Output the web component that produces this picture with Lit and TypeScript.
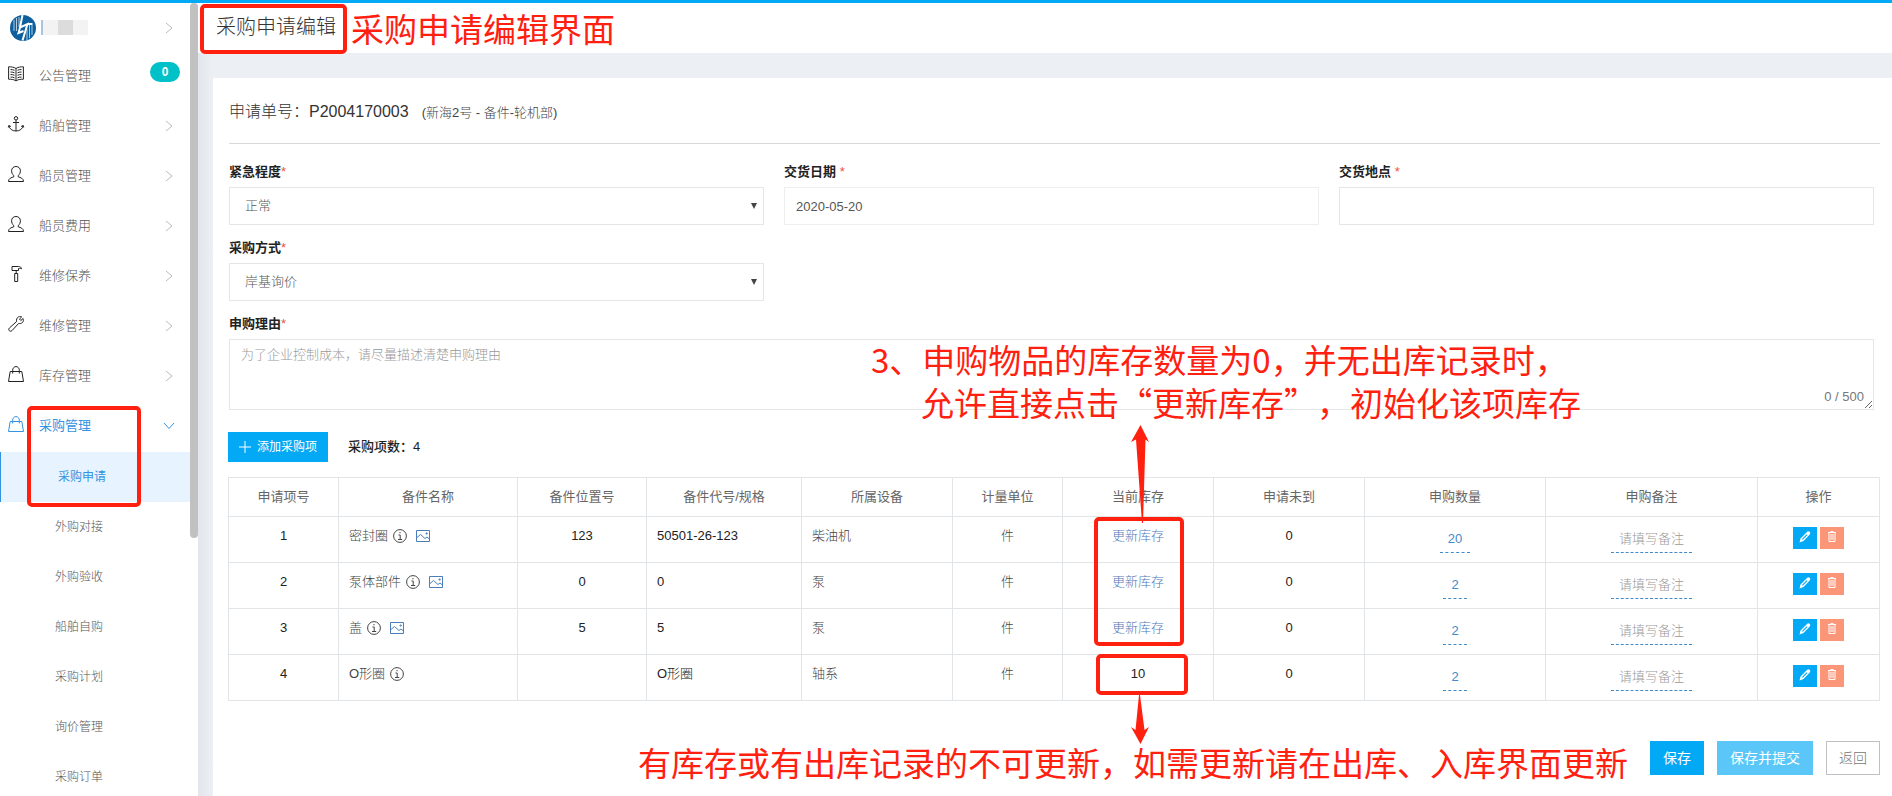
import { LitElement, html, css, svg, nothing, TemplateResult } from "lit";
import { customElement } from "lit/decorators.js";
import { classMap } from "lit/directives/class-map.js";

const chevronRight = html`<svg class="chev" viewBox="0 0 8 12" width="8" height="12" aria-hidden="true"><path d="M1 1l6 5-6 5" /></svg>`;
const chevronDown = html`<svg class="chev" viewBox="0 0 12 8" width="12" height="8" aria-hidden="true"><path d="M1 1l5 5.500 5-5.500" /></svg>`;

const icons: Record<string, TemplateResult> = {
  book: svg`<path d="M8 2.500C6 1 3 .8.600.8v12.400c2.400 0 5.400.2 7.400 1.700 2-1.500 5-1.700 7.400-1.700V.8C13 .8 10 1 8 2.500zM8 2.500v12.400M2.500 3.500c1.500 0 2.800.3 4 .8M2.500 6c1.500 0 2.800.3 4 .8M2.500 8.500c1.500 0 2.800.3 4 .8M2.500 11c1.500 0 2.800.3 4 .8M13.500 3.500c-1.500 0-2.800.3-4 .8M13.500 6c-1.500 0-2.800.3-4 .8M13.500 8.500c-1.500 0-2.800.3-4 .8M13.500 11c-1.500 0-2.800.3-4 .8"/>`,
  anchor: svg`<circle cx="8" cy="2.300" r="1.700"/><path d="M8 4v11M5 6.500h6M.8 9.500c.6 3.500 3.500 5.500 7.200 5.500s6.600-2 7.200-5.500M.3 11.500l.6-2 2 1M15.700 11.500l-.6-2-2 1"/>`,
  user: svg`<path d="M5.800 9.600C4.200 8.500 3.600 6.300 3.600 4.700 3.600 2.200 5.500.5 8 .5s4.400 1.700 4.400 4.200c0 1.600-.6 3.800-2.200 4.900v1.200c2.300.8 5.300 1.400 5.300 4.700H.5c0-3.300 3-3.900 5.300-4.700z"/>`,
  hammer: svg`<path d="M4 .5h6.500c1.500 0 2.700.6 3 2.300-1-.6-1.800-.6-3-.3V4.500H4zM6.700 7.500h3v8h-3zM8.200 4.500v3"/>`,
  wrench: svg`<path d="M10.500.9c1.200-.5 2.600-.3 3.200 0L11.500 3l1.300 1.500L15.100 2.500c.6 1.500.3 3-.6 4-1 1-2.500 1.300-3.800.9L4 14.600c-.8.800-2 .8-2.700.1-.8-.8-.7-2 .1-2.700l7.200-6.400C8.200 3.600 8.900 1.700 10.500.9z"/>`,
  bag: svg`<path d="M2.200 5.500h11.600l1.700 10H.5zM4.700 7.500V4.200C4.700 2.200 6 .6 8 .6s3.300 1.600 3.300 3.600v3.300"/>`,
};

@customElement("side-nav")
export class SideNav extends LitElement {
  static styles = css`
    :host { display: flex; flex: none; width: 198px; overflow: hidden; background: #fff; }
    nav { flex: 1; min-width: 0; }
    .brand { display: flex; align-items: center; height: 49px; box-sizing: border-box; padding: 0 17px 0 10px; gap: 5px; }
    .mask { display: flex; height: 15px; width: 47px; flex: none; }
    .mask i { flex: 1; background: #f3f3f4; }
    .mask i.edge { flex: none; width: 2px; background: #a9c4dc; }
    .mask i.dark { background: #dcdcdc; }
    .chev { fill: none; stroke: #bbb; stroke-width: 1; margin-left: auto; }
    a { display: flex; align-items: center; height: 50px; padding: 0 17px 2px 8px; box-sizing: border-box; color: #555; font-size: 13px; text-decoration: none; }
    .icon { width: 16px; height: 16px; margin: 0 15px 4px 0; fill: none; stroke: #222; stroke-width: 1; flex: none; overflow: visible; }
    .badge { margin: 0 -7px 8px auto; width: 30px; height: 20px; border-radius: 10px; background: #00c0c8; color: #fff; font-size: 12px; line-height: 20px; font-weight: 700; text-align: center; }
    .open { color: #3492e0; font-weight: 400; }
    .open .icon, .open .chev { stroke: #3492e0; }
    .open .chev { margin-right: -2px; }
    .sub { padding: 0 17px 0 55px; font-size: 12px; }
    .current { border-left: 1px solid #3492e0; padding-left: 57px; background: #e7f4ff; color: #3492e0; font-weight: 400; }
    .track { flex: none; width: 8px; }
    .thumb { height: 67.5%; border-radius: 4px; background: #c1c1c1; }
  `;
  items = [
    { icon: "book", label: "公告管理", badge: "0" },
    { icon: "anchor", label: "船舶管理" },
    { icon: "user", label: "船员管理" },
    { icon: "user", label: "船员费用" },
    { icon: "hammer", label: "维修保养" },
    { icon: "wrench", label: "维修管理" },
    { icon: "bag", label: "库存管理" },
    { icon: "bag", label: "采购管理", open: true },
  ];
  subs = ["采购申请", "外购对接", "外购验收", "船舶自购", "采购计划", "询价管理", "采购订单"];
  render() {
    return html`<nav>
        <div class="brand">
          <svg viewBox="0 0 26 26" width="26" height="26" aria-hidden="true">
            <circle cx="13" cy="13" r="13" fill="#0d5f9e" />
            <path d="M6.500 3v13M4 5v11M19.500 10v13M22 10v10M17 14v11M9 2v10" stroke="#fff" stroke-width=".7" />
            <path d="M12.500 0L10 12.500l7.500-3.500-5 16.500M10 12.500L8.500 18l5-2M17.500 9h5" stroke="#fff" stroke-width="2" fill="none" />
          </svg>
          <span class="mask"><i class="edge"></i><i></i><i class="dark"></i><i></i></span>
          ${chevronRight}
        </div>
        ${this.items.map((m) => html`<a href="#" class=${classMap({ open: !!m.open })}>
          <svg class="icon" viewBox="0 0 16 16" aria-hidden="true">${icons[m.icon]}</svg>${m.label}
          ${m.badge ? html`<span class="badge">${m.badge}</span>` : m.open ? chevronDown : chevronRight}
        </a>`)}
        ${this.subs.map((s, i) => html`<a href="#" class=${classMap({ sub: true, current: i === 0 })}>${s}</a>`)}
      </nav>
      <div class="track"><div class="thumb"></div></div>`;
  }
}

const rows = [
  { name: "密封圈", pic: true, pos: "123", code: "50501-26-123", dev: "柴油机", stock: "", qty: "20" },
  { name: "泵体部件", pic: true, pos: "0", code: "0", dev: "泵", stock: "", qty: "2" },
  { name: "盖", pic: true, pos: "5", code: "5", dev: "泵", stock: "", qty: "2" },
  { name: "O形圈", pic: false, pos: "", code: "O形圈", dev: "轴系", stock: "10", qty: "2" },
];
const columns: [string, number][] = [
  ["申请项号", 110], ["备件名称", 179], ["备件位置号", 129], ["备件代号/规格", 155], ["所属设备", 151], ["计量单位", 110],
  ["当前库存", 151], ["申请未到", 151], ["申购数量", 181], ["申购备注", 212], ["操作", 122],
];
const total = columns.reduce((a, c) => a + c[1], 0);

@customElement("item-table")
export class ItemTable extends LitElement {
  static styles = css`
    :host { display: block; }
    table { width: 100%; border-collapse: collapse; table-layout: fixed; font-size: 13px; line-height: 20px; }
    th, td { border: 1px solid #e1e5e8; padding: 0 10px; box-sizing: border-box; text-align: center; }
    th { height: 39px; font-weight: 400; color: #666; }
    td { height: 46px; padding-top: 9px; vertical-align: top; color: #222; }
    .left { text-align: left; }
    .cjk { color: #444; }
    .name { display: flex; align-items: center; gap: 5px; }
    .name svg { fill: none; stroke: #444; stroke-width: 1; flex: none; }
    .name .pic { stroke: #4a7ebb; margin-left: 4px; }
    a { color: #5079b8; text-decoration: none; }
    a.edit { display: inline-block; margin-top: 3px; padding: 0 8px 3px; border-bottom: 1px dashed #428bca; color: #428bca; }
    a.none { color: #999; }
    .ops { display: flex; justify-content: center; gap: 3px; padding-top: 1px; }
    button { width: 24px; height: 22px; padding: 0; border: 0; display: grid; place-items: center; background: #03a9f4; }
    button.del { background: #fb9678; }
    button svg { margin-bottom: 2px; }
  `;
  render() {
    return html`<table>
      <colgroup>${columns.map((c) => html`<col style="width:${(c[1] / total) * 100}%" />`)}</colgroup>
      <thead><tr>${columns.map((c) => html`<th>${c[0]}</th>`)}</tr></thead>
      <tbody>${rows.map((r, i) => html`<tr>
        <td>${i + 1}</td>
        <td class="left cjk"><span class="name">${r.name}
          <svg viewBox="0 0 14 14" width="14" height="14" aria-hidden="true"><circle cx="7" cy="7" r="6.400" /><path d="M5.500 6h1.700v4.500M5 10.500h4.200M7 3v1.300" /></svg>
          ${r.pic ? html`<svg class="pic" viewBox="0 0 14 14" width="14" height="14" aria-hidden="true"><path d="M.5 1.500h13v11H.5zM1 8.500l3.500-3 4.500 4 2-1.500 2.500 2M10 4h1.200v1H10z" /></svg>` : nothing}</span></td>
        <td>${r.pos}</td>
        <td class="left">${r.code}</td>
        <td class="left cjk">${r.dev}</td>
        <td class="cjk">件</td>
        <td>${r.stock || html`<a href="#">更新库存</a>`}</td>
        <td>0</td>
        <td><a class="edit" href="#">${r.qty}</a></td>
        <td><a class="edit none" href="#">请填写备注</a></td>
        <td><div class="ops">
          <button type="button" aria-label="编辑"><svg viewBox="0 0 12 12" width="12" height="12"><path d="M.5 11.500l1-4L8 1c1-1 1.500-1 2.500-.2s1 1.700.2 2.700L4.500 10zM3.800 8.800l4.700-4.700-.8-.8L3 8z" fill="#fff" fill-rule="evenodd" /></svg></button>
          <button type="button" class="del" aria-label="删除"><svg viewBox="0 0 12 12" width="12" height="12"><path d="M2 1.500h8M4.500.5h3M3 2v8.500h6V2M5 3v6M7 3v6" fill="none" stroke="#fff" stroke-width="1" /></svg></button>
        </div></td>
      </tr>`)}</tbody></table>`;
  }
}

@customElement("app-root")
export class AppRoot extends LitElement {
  static styles = css`
    :host { display: flex; flex-direction: column; position: relative; height: 100vh; overflow: hidden; background: #ecf0f5; color: #333; font-family: "Liberation Sans", "Noto Sans CJK SC", sans-serif; font-weight: 300; font-size: 13px; line-height: 20px; }
    .topbar { height: 3px; flex: none; background: #03a9f4; }
    .body { display: flex; flex: 1; min-height: 0; }
    main { flex: 1; min-width: 0; display: flex; flex-direction: column; background: linear-gradient(90deg, #e2e6ec, #ecf0f5 15px); }
    h1 { margin: 0; padding: 0 18px; height: 50px; flex: none; background: #fff; font-size: 20px; line-height: 48px; font-weight: 300; color: #333; box-sizing: border-box; }
    .card { flex: 1; margin: 25px 0 0 15px; padding: 22px 12px 0 15px; background: #fff; }
    h2 { display: flex; gap: 13px; align-items: baseline; margin: 0 0 18px 1px; height: 24px; padding-bottom: 19px; border-bottom: 1px solid #d8d8dc; font-size: 16px; line-height: 24px; font-weight: 300; color: #333; }
    h2 small { font-size: 13px; line-height: 20px; color: #444; }
    .form { display: grid; grid-template-columns: repeat(3, 1fr); gap: 13px 20px; padding: 0 6px 0 1px; }
    .field { display: flex; flex-direction: column; gap: 5px; position: relative; }
    .break { grid-column: 1; }
    .wide { grid-column: 1 / -1; }
    label { font-weight: 700; color: #222; }
    label b { color: #f0523c; font-weight: 300; }
    input, select, textarea { display: block; width: 100%; height: 38px; box-sizing: border-box; margin: 0; padding: 0 11px; border: 1px solid #e4e7ea; border-radius: 0; background: #fff; color: #565656; font: inherit; outline: 0; }
    select { appearance: none; padding: 0 15px; }
    .pick { display: grid; align-items: center; }
    .pick > * { grid-area: 1 / 1; }
    .pick svg { justify-self: end; margin-right: 7px; pointer-events: none; }
    .date { border-color: #eee; }
    textarea { height: 71px; padding: 5px 11px; resize: both; }
    textarea::placeholder { color: #999; opacity: 1; }
    .count { position: absolute; right: 10px; bottom: 3px; color: #777; }
    .bar { display: flex; align-items: center; gap: 20px; margin: 22px 0 15px; font-weight: 500; color: #222; }
    button { display: flex; align-items: center; justify-content: center; height: 34px; padding: 0 12px; border: 1px solid #03a9f4; background: #03a9f4; color: #fff; font: inherit; font-size: 14px; font-weight: 400; }
    .bar button { height: 30px; padding: 0 10px; gap: 6px; font-size: 12px; }
    .actions { display: flex; justify-content: flex-end; gap: 13px; margin-top: 40px; }
    .actions .light { background: #5bc6f8; border-color: #5bc6f8; }
    .actions .plain { background: #fff; border-color: #bfbfc4; color: #777; font-weight: 300; }
    .note { position: absolute; margin: 0; color: #ff2010; font: 400 33px/42px "Noto Sans CJK SC", sans-serif; text-spacing-trim: space-all; white-space: nowrap; }
    .box { position: absolute; box-sizing: border-box; border: 4px solid #ff2010; border-radius: 5px; pointer-events: none; }
    .arrow { position: absolute; fill: #ff2010; pointer-events: none; }
    .n-title { left: 351px; top: 7px; }
    .n-stock { left: 871px; top: 338px; }
    .n-stock span { display: block; }
    .n-stock span + span { padding: 1px 0 0 50px; }
    .n-lock { left: 638px; top: 741px; }
    .b-title { left: 200px; top: 4px; width: 147px; height: 50px; }
    .b-menu { left: 27px; top: 406px; width: 114px; height: 101px; }
    .b-stock { left: 1094px; top: 517px; width: 90px; height: 129px; }
    .b-ten { left: 1096px; top: 654px; width: 92px; height: 41px; }
    .a-up { left: 1131px; top: 424px; }
    .a-down { left: 1131px; top: 695px; }
  `;
  private select(id: string, label: string, value: string) {
    return html`<div class="field break"><label for=${id}>${label}<b>*</b></label>
      <div class="pick"><select id=${id}><option>${value}</option></select>
      <svg viewBox="0 0 6 6" width="6" height="6" aria-hidden="true"><path d="M0 0h6L3 6z" fill="#444" /></svg></div></div>`;
  }
  render() {
    return html`
      <div class="topbar"></div>
      <div class="body">
        <side-nav></side-nav>
        <main>
          <h1>采购申请编辑</h1>
          <section class="card">
            <h2><span>申请单号：P2004170003</span><small>(新海2号 - 备件-轮机部)</small></h2>
            <div class="form">
              ${this.select("urgency", "紧急程度", "正常")}
              <div class="field"><label for="date">交货日期 <b>*</b></label><input id="date" class="date" .value=${"2020-05-20"} /></div>
              <div class="field"><label for="place">交货地点 <b>*</b></label><input id="place" /></div>
              ${this.select("method", "采购方式", "岸基询价")}
              <div class="field wide"><label for="reason">申购理由<b>*</b></label><textarea id="reason" placeholder="为了企业控制成本，请尽量描述清楚申购理由"></textarea><span class="count">0 / 500</span></div>
            </div>
            <div class="bar">
              <button type="button"><svg viewBox="0 0 12 12" width="12" height="12" aria-hidden="true"><path d="M6 0v12M0 6h12" stroke="#fff" /></svg>添加采购项</button>
              <span>采购项数：4</span>
            </div>
            <item-table></item-table>
            <div class="actions">
              <button type="button">保存</button><button type="button" class="light">保存并提交</button><button type="button" class="plain">返回</button>
            </div>
          </section>
        </main>
      </div>
      <div class="box b-title"></div><div class="box b-menu"></div><div class="box b-stock"></div><div class="box b-ten"></div>
      <svg class="arrow a-up" viewBox="0 0 18 100" width="18" height="100" aria-hidden="true"><path d="M9.500 1L18 18l-3.500-2.500L12 99h-1L5 15.500 0 18z" /></svg>
      <svg class="arrow a-down" viewBox="0 0 18 50" width="18" height="50" aria-hidden="true"><path d="M9.500 49L18 32l-4.500 3L9 0H8L4.500 35 0 32z" /></svg>
      <p class="note n-title">采购申请编辑界面</p>
      <p class="note n-stock"><span>3、申购物品的库存数量为0，并无出库记录时，</span><span>允许直接点击“更新库存”，初始化该项库存</span></p>
      <p class="note n-lock">有库存或有出库记录的不可更新，如需更新请在出库、入库界面更新</p>`;
  }
}
